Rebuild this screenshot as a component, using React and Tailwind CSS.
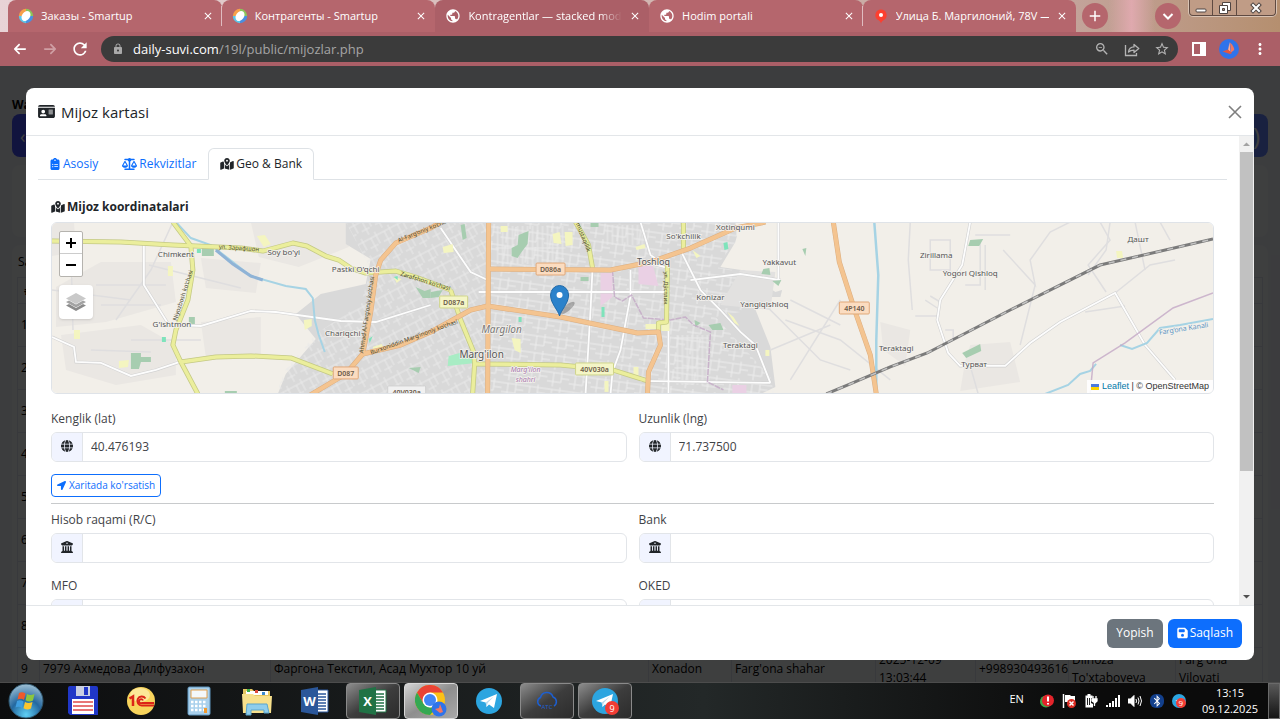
import {
  FaArrowLeft,
  FaArrowRight,
  FaBuildingColumns,
  FaClipboardList,
  FaFloppyDisk,
  FaGlobe,
  FaIdCard,
  FaMapLocationDot,
  FaScaleBalanced,
} from 'react-icons/fa6';
import { FaLocationArrow, FaBluetoothB, FaTelegramPlane } from 'react-icons/fa';
import {
  MdAdd,
  MdClose,
  MdLock,
  MdMoreVert,
  MdPublic,
  MdRefresh,
  MdStarBorder,
  MdZoomOut,
} from 'react-icons/md';

const tabs = [
  { title: 'Заказы - Smartup', icon: 'smartup', divider: true },
  { title: 'Контрагенты - Smartup', icon: 'smartup' },
  { title: 'Kontragentlar — stacked modal', icon: 'globe', active: true },
  { title: 'Hodim portali', icon: 'globe', divider: true },
  { title: 'Улица Б. Маргилоний, 78V —', icon: 'pin' },
];

function Favicon({ type }) {
  if (type === 'globe') return <MdPublic className="w-4 h-4 shrink-0 text-white" />;
  if (type === 'pin') {
    return (
      <svg viewBox="0 0 16 16" className="w-4 h-4 shrink-0">
        <path d="M8 1.500a5.600 5.600 0 0 0-3.600 9.900C6 12.700 7.400 13 8 15.500c.6-2.500 2-2.800 3.600-4.100A5.600 5.600 0 0 0 8 1.500z" fill="#fc3f30" />
        <circle cx="8" cy="7" r="2" fill="#fff" />
      </svg>
    );
  }
  return (
    <svg viewBox="0 0 16 16" className="w-4 h-4 shrink-0">
      <path d="M8 .8A7.200 7.200 0 0 0 .8 8L8 8z" fill="#f6a04a" />
      <path d="M8 .8A7.200 7.200 0 0 1 15.200 8H8z" fill="#8ac65a" />
      <path d="M15.200 8A7.200 7.200 0 0 1 8 15.200V8z" fill="#4a8fe0" />
      <path d="M.8 8A7.200 7.200 0 0 0 8 15.200V8z" fill="#5cc6ea" />
      <ellipse cx="8" cy="8" rx="4" ry="5.400" transform="rotate(35 8 8)" fill="#fff" />
    </svg>
  );
}

function TabStrip() {
  return (
    <div className="h-8 shrink-0 flex pl-2 bg-linear-to-r from-[#e8d3d6] from-0% via-[#c3a39a] via-84% to-[#b58f6f]">
      <div className="flex w-[84%]">
        {tabs.map((tab) => (
          <div
            key={tab.title}
            className={`relative flex-1 min-w-0 flex items-center gap-[7px] pl-[10px] pr-2 rounded-t-lg ${tab.active ? 'bg-[#ab5f67]' : 'bg-[#b5666d]'}`}
          >
            <Favicon type={tab.icon} />
            <span className={`flex-1 min-w-0 overflow-hidden whitespace-nowrap text-[11px] text-white ${tab.active ? 'mask-r-from-85% mask-r-to-100%' : ''}`}>
              {tab.title}
            </span>
            <button aria-label="Close tab" className="text-white">
              <MdClose className="w-3 h-3" />
            </button>
            {tab.divider && <span className="absolute right-0 top-[6px] h-5 w-px bg-[#e0bcc0]" />}
          </div>
        ))}
      </div>
      <button aria-label="New tab" className="ml-[6px] mt-[3px] w-[26px] h-[26px] shrink-0 rounded-full bg-[#b5666d] text-white flex items-center justify-center">
        <MdAdd className="w-[18px] h-[18px]" />
      </button>
      <div className="flex-1 bg-linear-to-r from-[#c3a39a00] via-[#dfa9ae] to-[#b5918000]" />
      <button aria-label="Search tabs" className="mt-[3px] w-[26px] h-[26px] shrink-0 rounded-full bg-[#b5666d] text-white flex items-center justify-center">
        <svg viewBox="0 0 12 12" className="w-3 h-3" fill="none" stroke="currentColor" strokeWidth="2">
          <path d="M1.500 4 6 8.500 10.500 4" />
        </svg>
      </button>
      <div className="ml-2 mr-1 h-4 shrink-0 flex border border-t-0 border-[#5f4a42] rounded-b-sm divide-x divide-[#5f4a42] bg-[#c09c86] shadow-[0_0_0_1px_#d9c3b4]">
        <button aria-label="Minimize" className="w-[23px] flex items-center justify-center">
          <svg viewBox="0 0 12 12" className="w-3 h-3"><rect x="1" y="7" width="10" height="3" rx="1" fill="#fff" stroke="#4f4542" /></svg>
        </button>
        <button aria-label="Restore" className="w-6 flex items-center justify-center">
          <svg viewBox="0 0 12 12" className="w-3 h-3" fill="#fff" stroke="#4f4542">
            <path d="M3.500.5h8v8h-8z" />
            <path d="M.5 3.500h8v8h-8z" />
            <path d="M3.500 6.500h2v2h-2z" fill="#b0907c" />
          </svg>
        </button>
        <button aria-label="Close window" className="w-[38px] flex items-center justify-center">
          <svg viewBox="0 0 12 12" className="w-3 h-3" strokeLinecap="square">
            <path d="m3 3 6 6M9 3 3 9" stroke="#4f4542" strokeWidth="4" />
            <path d="m3 3 6 6M9 3 3 9" stroke="#fff" strokeWidth="2" />
          </svg>
        </button>
      </div>
    </div>
  );
}

function Toolbar() {
  return (
    <div className="h-[34px] shrink-0 flex items-center bg-[#ab5f67] text-white pl-3 pr-[11px]">
      <button aria-label="Back"><FaArrowLeft className="w-4 h-[14px]" /></button>
      <button aria-label="Forward" className="ml-[14px] text-[#cf9fa4]"><FaArrowRight className="w-4 h-[14px]" /></button>
      <button aria-label="Reload" className="ml-3"><MdRefresh className="w-5 h-5" /></button>
      <div className="ml-[11px] flex-1 h-[26px] rounded-full bg-[#3b3b3b] flex items-center pl-[11px] pr-2">
        <MdLock className="w-3 h-3 text-[#a9a9a9]" />
        <p className="ml-[9px] flex-1 text-[13px] leading-5 text-[#a5a5a5]">
          <span className="text-white">daily-suvi.com</span>/19l/public/mijozlar.php
        </p>
        <div className="flex items-center gap-[14px] text-[#b4b4b4]">
          <button aria-label="Zoom"><MdZoomOut className="w-4 h-4" /></button>
          <button aria-label="Share">
            <svg viewBox="0 0 16 16" className="w-4 h-4" fill="none" stroke="currentColor" strokeWidth="1.300">
              <path d="M1.500 4v10.500h11V12" />
              <path d="M4.500 11c.4-3.600 2.300-5 5.500-5.100V3.500l4.800 4-4.800 4V9.100C7.500 9.100 6 9.500 4.500 11z" strokeLinejoin="round" />
            </svg>
          </button>
          <button aria-label="Bookmark"><MdStarBorder className="w-4 h-4" /></button>
        </div>
      </div>
      <button aria-label="Side panel" className="ml-[14px]">
        <svg viewBox="0 0 14 14" className="w-[14px] h-[14px]">
          <path d="M0 0h14v14H0zM2 2v10h6V2z" fill="#fff" fillRule="evenodd" />
        </svg>
      </button>
      <button aria-label="Profile" className="ml-[13px]">
        <svg viewBox="0 0 20 20" className="w-5 h-5">
          <circle cx="10" cy="10" r="10" fill="#2f73ea" />
          <path d="M10.500 3 9 11.500l2.500 2z" fill="#ffab94" />
          <path d="M11 3.500c2.500 2 4.500 5.500 4.200 7.500L12 13.500z" fill="#f27662" />
          <path d="M3.500 12.500 9 10.500l4 3.500-2 1z" fill="#e4573e" />
        </svg>
      </button>
      <button aria-label="Menu" className="ml-3"><MdMoreVert className="w-[18px] h-[18px]" /></button>
    </div>
  );
}

// Customers table that stays behind the dialog
function CustomersPage() {
  const cell = 'border border-[#dfe3ef] pl-[3px] pr-1 leading-[18px]';
  return (
    <div className="h-full overflow-hidden bg-[#eef1f8] px-3 pt-[30px] text-[12px] text-black">
      <h1 className="font-bold leading-[18px]">Water</h1>
      <nav className="h-[43px] rounded-lg bg-linear-to-r from-[#4450f5] to-[#6484ff] text-white flex items-center justify-between px-2">
        <span className="text-lg">‹</span>
        <span className="text-2xl">)</span>
      </nav>
      <div className="mt-2 h-[72px] rounded-lg bg-[#f8f9fb]" />
      <div className="mt-2 rounded-lg bg-[#f8f9fb] px-[5px] pt-2">
        <p className="leading-[18px] px-px">Sahifa</p>
        <table className="mt-[6px] w-full table-fixed border-collapse">
          <colgroup>
            <col className="w-[22px]" />
            <col className="w-[231px]" />
            <col />
            <col className="w-[83px]" />
            <col className="w-[144px]" />
            <col className="w-[100px]" />
            <col className="w-[93px]" />
            <col className="w-[107px]" />
            <col className="w-[87px]" />
          </colgroup>
          <thead>
            <tr className="h-[26px]">
              <th className={cell}>#</th>
              <th className={cell} colSpan={8} />
            </tr>
          </thead>
          <tbody>
            {[1, 2, 3, 4, 5, 6, 7, 8].map((n) => (
              <tr key={n} className="h-[43px]">
                <td className={cell}>{n}</td>
                <td className={cell} colSpan={8} />
              </tr>
            ))}
            <tr className="h-[43px]">
              <td className={cell}>9</td>
              <td className={cell}>7979 Ахмедова Дилфузахон</td>
              <td className={cell}>Фаргона Текстил, Асад Мухтор 10 уй</td>
              <td className={cell}>Xonadon</td>
              <td className={cell}>Farg'ona shahar</td>
              <td className={cell}>2025-12-09 13:03:44</td>
              <td className={cell}>+998930493616</td>
              <td className={cell}>Dilnoza To'xtaboyeva</td>
              <td className={cell}>Farg'ona Viloyati</td>
            </tr>
          </tbody>
        </table>
      </div>
    </div>
  );
}

const yellowRoads = [
  'M51 241 120 242 172 245 240 248 262 251 292 243 306 246 325 256 338 260 350 268 365 273 395 271 415 277 450 290',
  'M172 222 190 246 192 270 187 300 175 330 172 345 180 362 197 394',
  'M180 362 215 357 250 356 290 358 332 374',
  'M575 222 588 245 592 268',
  'M683 222V250',
  'M667 262 666 322 658 323 658 333',
  'M450 290 460 320 473 352 474 364 472 394',
  'M474 364 560 365 612 370 647 381',
];

const orangeRoads = [
  'M440 222 430 228 395 243 380 260 375 275 370 312 362 354 345 374 308 396',
  'M362 354 400 345 430 332 470 310 487 306 560 317 637 333 658 332 660 345 648 372 647 394',
  'M488 222 487 394',
  'M488 269 610 270 650 262 690 248 735 228 765 222',
  'M833 222 839 262 855 312 870 355 876 394',
];

const whiteRoads = [
  'M143 243 V285 L168 325 200 326 250 311 275 312 340 321 375 322 430 305',
  'M51 337 73 347 75 362 100 363 130 376 155 370 182 361',
  'M440 228 455 250 470 272 487 280',
  'M478 292H665',
  'M600 222 640 222 650 255 660 262',
  'M592 268 590 310 585 394',
  'M630 270 630 296 620 350 612 372 610 394',
  'M668 330V394',
  'M680 250 700 290 720 310 740 332 755 345 770 383',
  'M640 381 770 383',
  'M690 280 740 274 780 280',
  'M778 222 778 280',
  'M645 262 668 268',
  'M970 222 962 265 940 300 937 320 948 353 960 366 1005 366 1030 343 1060 322 1115 293 1145 345 1175 380',
];

const trackRoads = [
  'M172 222 150 270 115 320 M51 290 130 300 M70 250 72 330 M95 285H165 M100 305H160 M148 265 240 288 M130 340H200 M90 350 150 352',
  'M910 222 908 260 912 310 M930 240H950V270H930z M975 235H1010 M1003 250 1035 285 1030 260 1050 232 1070 222',
  'M785 320 840 340 890 380 M770 350 830 325 M790 380 840 300 M1035 285 1020 345 M1115 293 1150 265 1175 260 M1088 275 1106 250 1110 222',
  'M1100 222 1110 240 1088 265 1106 292 M1135 222 1145 270 M980 240V285H965 M985 245 V290 M1170 240 1160 222',
  'M915 316h24 M925 300l12 8 M930 296l10 6 M945 330h8v10 M970 366l8 28 M1085 312l40-6 M790 300l50 25 M760 300l60 60 30 10',
];

const greens = [
  'M201 247h12v9h-12z',
  'M130 353h10v4h10v5h-10l-2 7h-8z',
  'M188 317h6v7h-6z',
  'M518 235 528 231 527 244 521 252 517 258 511 256 511 248 517 245z',
  'M460 225 464 224 466 238 462 240z',
  'M415 287 424 291 430 289V298H422z',
  'M430 292 442 290 438 297 430 298z',
  'M580 277h8v4h-8z M590 223h8v4h-8z',
  'M708 325 720 323 723 330 712 330z M694 320 700 323 695 327z',
  'M763 269 769 268 770 275 761 274z M772 281 781 280 778 286z M802 249 806 248 805 256z',
  'M970 240 983 239 979 246 968 246z',
  'M962 353 980 344 981 351 966 358z',
  'M408 368 420 367 418 373z M224 391h12v3h-12z',
];

const parks = [
  'M256 236l8-1 6 9-7 3z', 'M167 266h5v10h-5z', 'M73 330h6v9h-6z', 'M118 361l10-1-1 7-9 1z', 'M303 320l8-1 0 7-7 4z',
  'M552 234l7-2 2 12-8-1z', 'M564 232h8v13l-7 1z', 'M442 247l10-3 1 8-10 1z', 'M500 226h7v6h-7z', 'M635 247l9-3 1 4-9 2z',
  'M645 324h12v5h-12z', 'M661 322h8v9h-8z', 'M692 250l8 6-4 2z', 'M511 338l9 1 0 14-6-3z', 'M633 367h5v9h-5z',
  'M727 312l6 5 6 9-5-3z', 'M604 381h4v11h-4z', 'M372 347l9-3 2 4-10 3z', 'M393 277l8 2-5 4z', 'M765 350h4v6h-4z', 'M1116 251l6 0 1 7-6 0z',
];

const places = [
  ['Chimkent', 175, 257, 8], ["Soy bo'yi", 283, 255, 8], ["Pastki O'qchi", 355, 272, 8], ["G'ishtmon", 171, 327, 8],
  ['Chariqchi', 342, 336, 8], ["So'kchilik", 683, 239, 8], ['Xotinqumi', 735, 230, 8], ['Toshloq', 653, 265, 9],
  ['Yakkavut', 779, 265, 8], ['Konizar', 710, 300, 8], ['Yangiqishloq', 764, 307, 8], ['Teraktagi', 740, 348, 8],
  ['Zirillama', 936, 258, 8], ['Yogori Qishloq', 970, 276, 8], ['Teraktagi', 896, 351, 8], ['Турват', 974, 367, 8],
  ['Дашт', 1138, 242, 8], ["Marg'ilon", 481, 358, 10],
];

const shields = [
  ['D086a', 550, 269, 29, '#fbdcc0', '#e0a878'],
  ['D087', 345, 373, 25, '#fbdcc0', '#e0a878'],
  ['4P140', 854, 308, 30, '#fbdcc0', '#e0a878'],
  ['D087a', 453, 302, 28, '#f4f5c6', '#cfd48a'],
  ['40V030a', 594, 369, 38, '#f4f5c6', '#cfd48a'],
  ['40V030a', 406, 392, 38, '#f1f1f1', '#d0d0d0'],
];

const streets = [
  ['ул. Зарафшон', 238, 250, 4], ['Zarafshon ko‘chasi', 424, 283, 17], ['Niyozbosh ko‘chasi', 184, 296, -72],
  ['Ahmad Al-Farg‘oniy ko‘chasi', 368, 315, -82], ['Al-Farg‘oniy ko‘chasi', 424, 232, -22],
  ['Burxoniddin Marg‘inoniy ko‘chasi', 414, 339, -20], ['mustaqillik', 581, 238, 68], ['ул. Дўстлик', 664, 288, 90],
];

function MapView() {
  return (
    <svg
      viewBox="51 222 1162 172"
      preserveAspectRatio="xMidYMid slice"
      className="absolute inset-0 w-full h-full"
      fontFamily="Noto Sans, sans-serif"
      fill="none"
    >
      <defs>
        <pattern id="blocks" width="22" height="17" patternUnits="userSpaceOnUse" patternTransform="rotate(8)">
          <path d="M0 3h22M6 3v14M14 0v12M0 12h14M14 8h8" stroke="#ededed" strokeWidth="1" />
        </pattern>
        <pattern id="blocksDiagonal" width="15" height="19" patternUnits="userSpaceOnUse" patternTransform="rotate(-28)">
          <path d="M0 4h15M5 4v15M0 13h9M11 0v13" stroke="#e9e9e9" strokeWidth="1" />
        </pattern>
        <pattern id="hatch" width="5" height="30" patternUnits="userSpaceOnUse">
          <path d="M2 0v30M0 8h5" stroke="#eaeaea" />
        </pattern>
      </defs>
      <path d="M51 222h1162v172H51z" fill="#f2efe9" />

      {/* Built-up areas */}
      <g fill="#eae7e3">
        <path d="M51 222h22l2 30-24 4zM100 262l70 0 5 40-70 20-50 5 0-40zM200 258l60 5-5 30-50-5zM250 222h98v25l-50 20-40-10zM60 335l80-10 35 20 0 30-60 10-50-15zM200 322l60-5 0 40-55 0zM880 322l30 8-5 36-22-16zM970 345l40-3 10 40-60 9 5-30z" />
      </g>
      <path d="M345 222h395l-5 20-15 25 35 5 30 5-5 20-30 0 20 50 5 40-25 12H275l10-25 30-35-20-25 25-20 45-10 5-25-25-15z" fill="#d9d9d9" />
      <path d="M345 222h145v172H275l10-25 30-35 45-30 10-35z" fill="url(#blocksDiagonal)" />
      <path d="M490 222h250l-5 20-20 25 60 10-10 30-50 10 55 60 5 22-30 15H490z" fill="url(#blocks)" />
      <path d="M495 226h70v38h-70zM674 335h34v50h-34zM605 225h40v20h-40z" fill="url(#hatch)" />
      <path d="M735 222 840 222v50l-65 20-35-25z" fill="#f2efe9" />
      <path d="M740 270 775 272 770 310 720 305z" fill="#e2e1e0" />
      <g fill="#ead0e4">
        <path d="M600 273h12v24l-12 9zM638 267l14-3 6 22-20-2zM732 385h14v9h-14z" />
      </g>

      <g stroke="#dfdedf" strokeWidth="1.500">{trackRoads.map((d) => <path key={d} d={d} />)}</g>
      <g stroke="#d2d2d2" strokeWidth="3">{whiteRoads.map((d) => <path key={d} d={d} />)}</g>
      <g stroke="#fdfdfd" strokeWidth="1.800">{whiteRoads.map((d) => <path key={d} d={d} />)}</g>

      <g fill="#a7cdb0">{greens.map((d) => <path key={d} d={d} />)}</g>
      <g fill="#f4f5c0">{parks.map((d) => <path key={d} d={d} />)}</g>
      <g fill="#7fe3bb">
        <path d="M161 337h4v5h-4zM196 249h4v4h-4zM723 243l4-1 1 7-4 1zM601 307h3v10h-3zM393 277l4-1v4zM518 317h3v5h-3zM368 339l4-3-3 7z" />
        <path d="M448 356l11-3 6 2 8-2 2 10-28 3z" fill="#a8ecc4" />
      </g>

      {/* Canals and rivers */}
      <g stroke="#a6d3e4" strokeWidth="2">
        <path d="M175 222 190 238 210 245 232 262 250 276 285 286 305 289 312 298 314 320 318 335 324 352" />
        <path d="M874 222 878 275 876 340 876 392" strokeWidth="2.500" />
        <path d="M1120 345 1132 349 1147 343 1160 328 1180 325 1213 319M1045 394 1068 385 1080 374 1090 371 1096 364" />
      </g>
      <path d="M215 250 232 264 250 276 262 280" stroke="#8fb3d6" strokeWidth="3" />

      <g stroke="#c3a7c6" strokeWidth="1.500" opacity=".8">
        <path d="M612 270 614 297 622 301 631 295 643 318 670 320 685 317 693 325 710 332 707 382 723 390" strokeDasharray="6 1" />
        <path d="M1213 293 1173 308 1125 343 1093 363 1090 394" />
      </g>

      <g stroke="#c4c984" strokeWidth="5" strokeLinejoin="round">{yellowRoads.map((d) => <path key={d} d={d} />)}</g>
      <g stroke="#ebee9c" strokeWidth="3.500" strokeLinejoin="round">{yellowRoads.map((d) => <path key={d} d={d} />)}</g>
      <g stroke="#dcae80" strokeWidth="5" strokeLinejoin="round">{orangeRoads.map((d) => <path key={d} d={d} />)}</g>
      <g stroke="#f4c490" strokeWidth="4" strokeLinejoin="round">{orangeRoads.map((d) => <path key={d} d={d} />)}</g>

      <path d="M826 394 850 384 890 367 927 353 1010 310 1100 265 1213 239" stroke="#7b7b7b" strokeWidth="3" />
      <path d="M826 394 850 384 890 367 927 353 1010 310 1100 265 1213 239" stroke="#c4c4c4" strokeWidth="1.500" strokeDasharray="6 6" />

      <g fill="#4c4a30" fontSize="6" textAnchor="middle">
        {streets.map(([name, x, y, angle]) => (
          <text key={name} x={x} y={y} transform={`rotate(${angle} ${x} ${y})`}>{name}</text>
        ))}
      </g>
      <g fill="#555555" stroke="#f4f2ee" strokeWidth="1.500" paintOrder="stroke" textAnchor="middle">
        {places.map(([name, x, y, size]) => (
          <text key={name + x} x={x} y={y} fontSize={size}>{name}</text>
        ))}
        <text x="501" y="333" fontSize="10" fontStyle="italic" fill="#777">Margilon</text>
        <text x="525" y="372" fontSize="7" fontStyle="italic" fill="#a676ac">Marg'ilon</text>
        <text x="525" y="382" fontSize="7" fontStyle="italic" fill="#a676ac">shahri</text>
        <text x="1184" y="331" fontSize="7" fill="#5c93c0" transform="rotate(-9 1184 331)">Farg‘ona Kanali</text>
      </g>
      {shields.map(([name, x, y, width, fill, stroke]) => (
        <g key={name + x}>
          <rect x={x - width / 2} y={y - 6} width={width} height="12" rx="1" fill={fill} stroke={stroke} />
          <text x={x} y={y + 3} fontSize="7" fontWeight="600" fill="#6b5a48" textAnchor="middle">{name}</text>
        </g>
      ))}

      {/* Marker */}
      <ellipse cx="567" cy="308" rx="9" ry="3" transform="rotate(-40 567 308)" fill="#000" opacity=".25" />
      <path d="M559 316c-1.500-6-9-12.500-9-21a9 9.500 0 0 1 18 0c0 8.500-7.500 15-9 21z" fill="#2b82cb" stroke="#1f68a8" />
      <circle cx="559" cy="295" r="3" fill="#fff" />
    </svg>
  );
}

function MapBox() {
  return (
    <div className="relative h-[172px] rounded-md border border-[#dfe3e8] overflow-hidden">
      <MapView />
      <div className="absolute left-[7px] top-2 flex flex-col items-start gap-2 text-black">
        <div className="w-6 rounded-xs border border-[#b5b3ae] bg-white divide-y divide-[#cccccc]">
          <button aria-label="Zoom in" className="w-full h-[22px] flex items-center justify-center">
            <svg viewBox="0 0 10 10" className="w-[10px] h-[10px]" stroke="currentColor" strokeWidth="2"><path d="M0 5h10M5 0v10" /></svg>
          </button>
          <button aria-label="Zoom out" className="w-full h-[22px] flex items-center justify-center">
            <svg viewBox="0 0 10 10" className="w-[10px] h-[10px]" stroke="currentColor" strokeWidth="2"><path d="M0 5h10" /></svg>
          </button>
        </div>
        <button aria-label="Layers" className="w-[34px] h-[34px] rounded-sm bg-white shadow flex items-center justify-center">
          <svg viewBox="0 0 20 20" className="w-5 h-5">
            <path d="M0 13.500l10 5.500 10-5.500-3-1.500-7 4-7-4z" fill="#8b8b8b" />
            <path d="M0 10l10 5.500L20 10l-3-1.500-7 4-7-4z" fill="#a3a3a3" />
            <path d="M10 1 0 6.500 10 12l10-5.500z" fill="#c9c9c9" />
          </svg>
        </button>
      </div>
      <div className="absolute right-0 bottom-0 h-[13px] px-1 bg-white/90 flex items-center gap-[3px] font-['Liberation_Sans',sans-serif] text-[9px] text-[#333333]">
        <svg viewBox="0 0 8 6" className="w-2 h-[6px]"><path d="M0 0h8v3H0z" fill="#4c7be1" /><path d="M0 3h8v3H0z" fill="#ffd500" /></svg>
        <span><a href="#leaflet" className="text-[#0078a8]">Leaflet</a> | © OpenStreetMap</span>
      </div>
    </div>
  );
}

function Field({ id, label, icon: Icon, value = '' }) {
  return (
    <div>
      <label htmlFor={id} className="block mb-1 leading-[18px] text-[#3f4347]">{label}</label>
      <div className="flex h-[30px] rounded-md border border-[#e2e5e9] overflow-hidden">
        <span className="w-[31px] bg-[#f1f4ff] border-r border-[#e2e5e9] flex justify-center pt-[7px] text-[#212529]">
          <Icon className="w-3 h-3" />
        </span>
        <input id={id} defaultValue={value} className="flex-1 min-w-0 px-2 text-[#3f4347] outline-none" />
      </div>
    </div>
  );
}

function Scrollbar() {
  return (
    <div className="w-[15px] shrink-0 bg-[#f1f1f1] flex flex-col items-center">
      <svg viewBox="0 0 15 16" className="w-[15px] h-4"><path d="M4 10h7L7.500 6.500z" fill="#a3a3a3" /></svg>
      <div className="w-full flex-1 px-px">
        <div className="h-[73%] bg-[#c1c1c1]" />
      </div>
      <svg viewBox="0 0 15 16" className="w-[15px] h-4"><path d="M4 6h7L7.500 9.500z" fill="#505050" /></svg>
    </div>
  );
}

function CustomerModal() {
  return (
    <div role="dialog" aria-label="Mijoz kartasi" className="absolute inset-x-[26px] inset-y-[22px] rounded-lg bg-white flex flex-col overflow-hidden text-[12px] text-[#212529]">
      <header className="h-12 shrink-0 flex items-center justify-between px-3 border-b border-[#e3e6e9]">
        <h2 className="flex items-center gap-[6px] text-[15px] leading-6">
          <FaIdCard className="w-[17px] h-[15px]" /> Mijoz kartasi
        </h2>
        <button aria-label="Yopish" className="text-[#7f7f7f]">
          <svg viewBox="0 0 14 14" className="w-[14px] h-[14px]" stroke="currentColor" strokeWidth="1.600"><path d="m1 1 12 12M13 1 1 13" /></svg>
        </button>
      </header>

      <div className="flex-1 min-h-0 flex">
        <div className="flex-1 min-w-0 overflow-hidden px-3 pt-3">
          <div role="tablist" className="flex h-8 border-b border-[#dee2e6]">
            <button role="tab" className="px-3 flex items-center gap-[3px] text-[#0d6efd]">
              <FaClipboardList className="w-[10px] h-3" /> Asosiy
            </button>
            <button role="tab" className="px-3 flex items-center gap-[2px] text-[#0d6efd]">
              <FaScaleBalanced className="w-[15px] h-3" /> Rekvizitlar
            </button>
            <button role="tab" aria-selected="true" className="px-[11px] -mb-px flex items-center gap-[2px] bg-white border border-b-white border-[#dee2e6] rounded-t-md">
              <FaMapLocationDot className="w-[14px] h-3" /> Geo &amp; Bank
            </button>
          </div>

          <div className="px-[13px] pt-[18px]">
            <h3 className="mb-[6px] flex items-center gap-[2px] font-bold leading-[18px]">
              <FaMapLocationDot className="w-[14px] h-3" /> Mijoz koordinatalari
            </h3>
            <MapBox />
            <div className="mt-4 grid grid-cols-2 gap-x-3">
              <Field id="lat" label="Kenglik (lat)" icon={FaGlobe} value="40.476193" />
              <Field id="lng" label="Uzunlik (lng)" icon={FaGlobe} value="71.737500" />
            </div>
            <button className="mt-3 h-[23px] px-[5px] flex items-center gap-[3px] rounded-sm border border-[#0d6efd] text-[10px] text-[#0d6efd]">
              <FaLocationArrow className="w-[9px] h-[9px]" /> Xaritada ko'rsatish
            </button>
            <hr className="mt-[6px] mb-[7px] border-[#c8cacc]" />
            <div className="grid grid-cols-2 gap-x-3 gap-y-[14px]">
              <Field id="account" label="Hisob raqami (R/C)" icon={FaBuildingColumns} />
              <Field id="bank" label="Bank" icon={FaBuildingColumns} />
              <Field id="mfo" label="MFO" icon={FaBuildingColumns} />
              <Field id="oked" label="OKED" icon={FaBuildingColumns} />
            </div>
          </div>
        </div>
        <Scrollbar />
      </div>

      <footer className="h-[55px] shrink-0 flex items-center justify-end gap-[5px] pr-3 border-t border-[#e3e6e9] text-white">
        <button className="h-[29px] px-[9px] rounded-md bg-[#6c757d]">Yopish</button>
        <button className="h-[29px] px-[9px] rounded-md bg-[#0d6efd] flex items-center gap-[2px]">
          <FaFloppyDisk className="w-[11px] h-3" /> Saqlash
        </button>
      </footer>
    </div>
  );
}

const OfficeIcon = ({ letter, color, light }) => (
  <svg viewBox="0 0 30 30" className="w-[30px] h-[30px]">
    <path d="M15 4h13v22H15z" fill="#fff" stroke={color} />
    <path d="M18 8h8M18 11h8M18 14h8M18 17h8M18 20h8M18 23h8" stroke={light} strokeWidth="1.300" />
    <path d="M1 4 18 1v28L1 26z" fill={color} />
    <text x="9.500" y="19.500" fontSize="13" fontWeight="700" fill="#fff" textAnchor="middle" fontFamily="Open Sans, sans-serif">{letter}</text>
  </svg>
);

const TelegramIcon = ({ badge }) => (
  <svg viewBox="0 0 30 30" className="w-[30px] h-[30px]">
    <circle cx="15" cy="15" r="13" fill="#2ca5e0" />
    <path d="M6 15 23 8l-3 14-5-3.500-2.500 2.500-.8-4.500z" fill="#fff" />
    <path d="m11.700 16.500 8-6-6 6.500-1.200 4z" fill="#b8d9ec" />
    {badge && <circle cx="22" cy="22" r="7" fill="#f23c34" />}
    {badge && <text x="22" y="25.500" fontSize="9" fill="#fff" textAnchor="middle" fontFamily="Open Sans, sans-serif">9</text>}
  </svg>
);

const taskbar = [
  {
    name: 'Total Commander',
    icon: (
      <svg viewBox="0 0 30 30" className="w-[30px] h-[30px]">
        <path d="M0 2a2 2 0 0 1 2-2h26a2 2 0 0 1 2 2v27H2l-2-2z" fill="#2037c8" />
        <path d="M8 0h14v10H8z" fill="#c9cfe2" /><path d="M16 1h4v8h-4z" fill="#2037c8" />
        <path d="M4 13h22v15H4z" fill="#fff" />
        <path d="M5 16h20M5 20h20M5 24h20" stroke="#e04a4a" strokeWidth="1.500" />
      </svg>
    ),
  },
  {
    name: '1C',
    icon: (
      <svg viewBox="0 0 30 30" className="w-[30px] h-[30px]">
        <circle cx="15" cy="15" r="14" fill="#f8d45c" /><ellipse cx="14" cy="9" rx="10" ry="7" fill="#fdf0b0" opacity=".7" />
        <path d="M3.500 12.500 7 10.500v9.500" fill="none" stroke="#dc2418" strokeWidth="2.500" />
        <path d="M19.500 12.500a4.500 4.500 0 1 0-3.500 7h12M17 14.500a2 2 0 1 0-1 2.500h12" fill="none" stroke="#dc2418" strokeWidth="1.800" />
      </svg>
    ),
  },
  {
    name: 'Calculator',
    icon: (
      <svg viewBox="0 0 30 30" className="w-[30px] h-[30px]">
        <rect x="4" y="1" width="22" height="28" rx="1.500" fill="#a9d0ec" stroke="#5f95bd" />
        <path d="M7 4h16v8H7z" fill="#f4f8fb" stroke="#e0a050" />
        <path d="M7 16h16M7 20h16M7 24h16" stroke="#fff" strokeWidth="2.500" strokeDasharray="2.500 1.500" />
        <path d="M20 22h3v5h-3z" fill="#f09a30" />
      </svg>
    ),
  },
  {
    name: 'Explorer',
    icon: (
      <svg viewBox="0 0 32 30" className="w-8 h-[30px]">
        <path d="M2 3h9l2 2h16v6H2z" fill="#e6c760" /><path d="M5 5h22v4H5z" fill="#fff" />
        <path d="M6 3h3v3H6z" fill="#3fae49" /><path d="M14 4h3v3h-3z" fill="#e04a3a" /><path d="M21 6h3v3h-3z" fill="#3a8ad0" />
        <path d="M1 8h11l2 2h17l-1 17H2z" fill="#f7e08c" />
        <path d="M6 18h20l2 9h-5v-3H10v5H5z" fill="#8fcdec" stroke="#5ba5cc" />
      </svg>
    ),
  },
  { name: 'Word', icon: <OfficeIcon letter="W" color="#2b579a" light="#2b579a" /> },
  { name: 'Excel', icon: <OfficeIcon letter="X" color="#207245" light="#207245" />, state: 'open' },
  {
    name: 'Chrome',
    state: 'current',
    icon: (
      <svg viewBox="0 0 32 32" className="w-8 h-8">
        <circle cx="15" cy="15" r="15" fill="#fbc116" />
        <path d="M2 7.500A15 15 0 0 1 28 7.500H15L8.500 18.750z" fill="#ea4335" />
        <path d="M2 7.500 8.500 18.750 15 22.500h6.500L15 30A15 15 0 0 1 2 7.500z" fill="#34a853" />
        <circle cx="15" cy="15" r="7.500" fill="#fff" /><circle cx="15" cy="15" r="6" fill="#4285f4" />
        <circle cx="24" cy="24" r="7.500" fill="#2f73ea" />
        <path d="m25 19 3 8-3 1-5-4 4-1z" fill="#f27662" />
      </svg>
    ),
  },
  { name: 'Telegram', icon: <TelegramIcon /> },
  {
    name: 'ATC',
    state: 'open',
    icon: (
      <svg viewBox="0 0 24 20" className="w-6 h-5" fill="none" stroke="#1d5fd0" strokeWidth="1.500">
        <path d="M6 15a4.500 4.500 0 0 1-.5-8.500A6.500 6.500 0 0 1 18 6a5 5 0 0 1 1 9" />
        <text x="12" y="18" fontSize="6" fill="#1d5fd0" stroke="none" textAnchor="middle" fontFamily="Open Sans, sans-serif">ATC</text>
      </svg>
    ),
  },
  { name: 'Telegram 2', icon: <TelegramIcon badge />, state: 'open' },
];

const slotStyles = {
  open: 'border-[#8a8a8a] bg-linear-to-br from-[#8d8d8d] via-[#3d3d3d] to-[#2c2c2c]',
  current: 'border-[#d8d8d8] bg-linear-to-br from-[#d5d5d5] via-[#8e8e8e] to-[#a9a9a9]',
};

function Taskbar() {
  return (
    <div className="h-[37px] shrink-0 flex items-stretch gap-1 border-t border-[#4c4c4c] bg-linear-to-r from-[#0c0d0e] from-0% via-[#232828] via-55% to-[#0b0b0b] to-85% text-white">
      <button aria-label="Start" className="w-[52px] flex items-center justify-center">
        <svg viewBox="0 0 36 36" className="w-9 h-9">
          <defs>
            <radialGradient id="orb" cx=".5" cy=".9" r=".9">
              <stop offset="0" stopColor="#5fd0f5" /><stop offset=".5" stopColor="#2468a0" /><stop offset="1" stopColor="#9fc0d4" />
            </radialGradient>
          </defs>
          <circle cx="18" cy="18" r="17" fill="url(#orb)" stroke="#2e566e" />
          <path d="M11 10c2-1 4-1 6.500.5L16 17c-2-1.500-4-1.500-6.500-.5z" fill="#ee5a2a" />
          <path d="M19 11c2 1 4 1.500 7.500 0L25 17.500c-3 1.500-5 1-7.500-.3z" fill="#8cc63e" />
          <path d="M9 18c2-1 4-1 6.500.5L14 25c-2-1.500-4-1.500-6.500-.5z" fill="#3f9ee0" />
          <path d="M17 19c2 1 4 1.500 7.500 0L23 25.500c-3 1.500-5 1-7.500-.3z" fill="#fcc62d" />
        </svg>
      </button>
      {taskbar.map((item) => (
        <button
          key={item.name}
          aria-label={item.name}
          className={`w-[54px] shrink-0 flex items-center justify-center rounded-sm border ${slotStyles[item.state] || 'border-transparent'}`}
        >
          {item.icon}
        </button>
      ))}

      <div className="ml-auto flex items-center text-[11px]">
        <span className="mr-4 pb-1">EN</span>
        <div className="flex items-center gap-2">
          <svg viewBox="0 0 14 14" className="w-[14px] h-[14px]">
            <circle cx="6" cy="7.500" r="6" fill="#3fa648" /><circle cx="8" cy="6.500" r="6" fill="#e3242b" />
            <path d="M8 2.500v5M8 9v1.500" stroke="#fff" strokeWidth="2" />
          </svg>
          <svg viewBox="0 0 14 14" className="w-[14px] h-[14px]">
            <path d="M1.500 0v14" stroke="#fff" strokeWidth="1.500" /><path d="M3 1h5l1 1h4v6H3z" fill="#fff" />
            <circle cx="9.500" cy="9.500" r="4.500" fill="#dd2c22" /><path d="m7.500 7.500 4 4m0-4-4 4" stroke="#fff" strokeWidth="1.500" />
          </svg>
          <svg viewBox="0 0 14 14" className="w-[14px] h-[14px]">
            <path d="M3.500 0h3v1.500h2V4H7v5l2 1v3.500H1.500v-12h2z" fill="#fff" />
            <path d="M3.500 4v7M5.500 4v7" stroke="#222" />
            <path d="M9 2v3m3-3v3M8 5h5v2l-2 2-3-2zM10.500 9v3" fill="#fff" stroke="#fff" strokeWidth="1.300" />
          </svg>
          <svg viewBox="0 0 14 14" className="w-[14px] h-[14px]" fill="#fff">
            <path d="M0 11h2v2H0zM3 9h2v4H3zM6 7h2v6H6zM9 4h2v9H9zM12 1h2v12h-2z" />
          </svg>
          <svg viewBox="0 0 14 14" className="w-[14px] h-[14px]" fill="none" stroke="#fff">
            <path d="M0 5h2.500L6 1.500v11L2.500 9H0z" fill="#fff" /><path d="M8 5q1 2 0 4M10 3.500q2 3.500 0 7M12 2q3 5 0 10" />
          </svg>
          <span className="w-[14px] h-[14px] flex items-center justify-center rounded-md bg-[#123f8c]"><FaBluetoothB className="w-3 h-3" /></span>
          <span className="relative w-[14px] h-[14px] flex items-center justify-center rounded-full bg-[#2ca5e0]">
            <FaTelegramPlane className="w-2 h-2" />
            <span className="absolute left-1 top-1 w-[10px] h-[10px] rounded-full bg-[#f23c34] text-[8px] leading-[10px] text-center">9</span>
          </span>
        </div>
        <p className="ml-4 text-center leading-4 whitespace-nowrap">13:15<br />09.12.2025</p>
        <button aria-label="Show desktop" className="ml-[10px] w-3 h-full border border-[#6a6a6a] bg-linear-to-b from-[#5a5a5a] to-[#151515]" />
      </div>
    </div>
  );
}

export default function App() {
  return (
    <div className="h-screen flex flex-col overflow-hidden font-['Open_Sans','Noto_Sans',sans-serif]">
      <TabStrip />
      <Toolbar />
      <main className="relative flex-1 min-h-0">
        <CustomersPage />
        <div className="absolute inset-0 bg-black/75" />
        <CustomerModal />
      </main>
      <Taskbar />
    </div>
  );
}
